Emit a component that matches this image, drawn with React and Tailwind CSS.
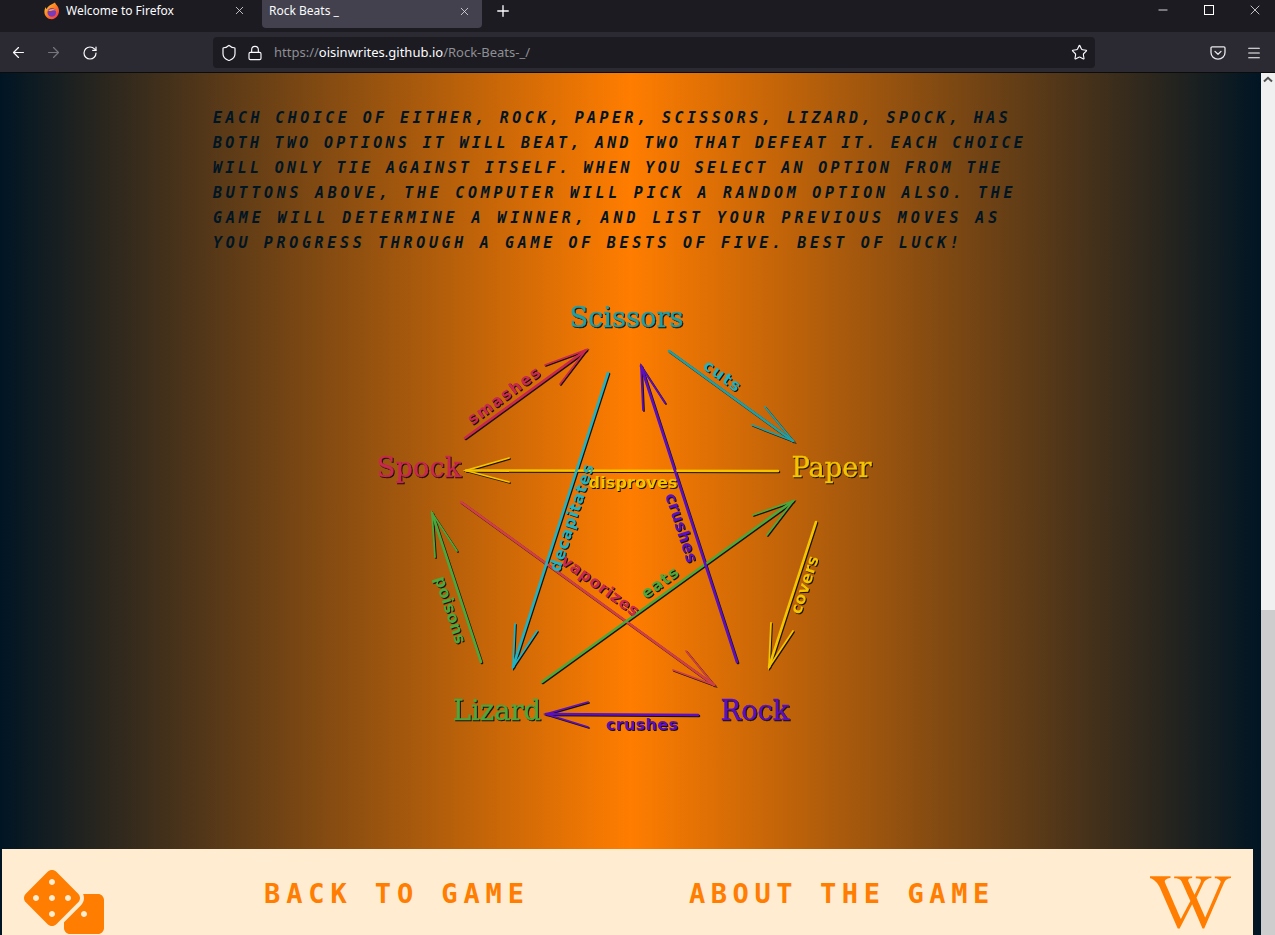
import { ArrowLeft, ArrowRight, RotateCw, Shield, Lock, Star, Menu, X, Plus, Minus } from 'lucide-react'
import { FaDice, FaWikipediaW } from 'react-icons/fa'

const RULE_LINES = [
  { text: 'each choice of either, rock, paper, scissors, lizard, spock, has', cls: 'tracking-[3.44px]' },
  { text: 'both two options it will beat, and two that defeat it. each choice', cls: 'tracking-[3.29px]' },
  { text: 'will only tie against itself. when you select an option from the', cls: 'tracking-[3.32px]' },
  { text: 'buttons above, the computer will pick a random option also. the', cls: 'tracking-[3.72px]' },
  { text: 'game will determine a winner, and list your previous moves as', cls: 'tracking-[3.89px]' },
  { text: 'you progress through a game of bests of five. best of luck!', cls: 'tracking-[3.67px]' },
]

const TEAL = '#1f9fa6'
const CYAN = '#1fb3c4'
const CRIMSON = '#c9284f'
const RED = '#cf3f4a'
const YELLOW = '#f5c400'
const PURPLE = '#5a0fc0'
const GREEN = '#4aa83e'

// page coordinates, the svg viewBox starts at 350,290
const ARROWS = [
  { color: RED, from: [461, 502], tip: [714, 685], a: [686, 651], b: [673, 670] },
  { color: TEAL, from: [669, 351], tip: [793, 441], a: [765, 407], b: [752, 425] },
  { color: CRIMSON, from: [465, 438], tip: [586, 350], a: [545, 365], b: [560, 384] },
  { color: YELLOW, from: [778, 471], tip: [466, 470.5], a: [509, 458], b: [509, 482] },
  { color: GREEN, from: [542, 682], tip: [793, 501], a: [753, 515], b: [767, 535] },
  { color: CYAN, from: [608, 373], tip: [513, 667], a: [515, 624], b: [537, 631] },
  { color: PURPLE, from: [737, 662], tip: [641, 366], a: [643, 410], b: [665, 403] },
  { color: GREEN, from: [481, 662], tip: [432, 513], a: [435, 557], b: [457, 551] },
  { color: YELLOW, from: [816, 522], tip: [769, 667], a: [771, 623], b: [793, 631] },
  { color: PURPLE, from: [698, 715], tip: [546, 714], a: [588, 702], b: [588, 727] },
]

const NAMES = [
  { text: 'Scissors', x: 626.5, y: 327, color: TEAL },
  { text: 'Spock', x: 419, y: 477, color: CRIMSON },
  { text: 'Paper', x: 831.5, y: 477, color: YELLOW },
  { text: 'Lizard', x: 497, y: 720, color: GREEN },
  { text: 'Rock', x: 755, y: 720, color: PURPLE },
]

const VERBS = [
  { text: 'smashes', x: 504, y: 396, angle: -36, len: 86, color: CRIMSON },
  { text: 'cuts', x: 722, y: 376, angle: 36, len: 42, color: CYAN },
  { text: 'vaporizes', x: 600, y: 586, angle: 36, len: 92, color: CRIMSON },
  { text: 'eats', x: 660, y: 583, angle: -36, len: 42, color: GREEN },
  { text: 'decapitates', x: 572, y: 518, angle: -72, len: 112, color: CYAN },
  { text: 'crushes', x: 681, y: 528, angle: 72, len: 72, color: PURPLE },
  { text: 'poisons', x: 450, y: 610, angle: 72, len: 70, color: GREEN },
  { text: 'covers', x: 805, y: 585, angle: -72, len: 60, color: YELLOW },
  { text: 'disproves', x: 633, y: 483, angle: 0, len: 89, color: YELLOW },
  { text: 'crushes', x: 642, y: 725, angle: 0, len: 72, color: PURPLE },
]

function FirefoxLogo() {
  return (
    <svg width="16" height="18" viewBox="0 0 16 18">
      <defs>
        <linearGradient id="fx" x1="0" y1="0" x2="1" y2="1">
          <stop offset="0" stopColor="#ffd43a" />
          <stop offset="0.5" stopColor="#ff7a1f" />
          <stop offset="1" stopColor="#f5245c" />
        </linearGradient>
      </defs>
      <path d="M11 0.5c0.6 2 2 2.6 3 4.5 1.4 2.6 1.4 5.6 0 8-1.4 2.6-3.8 4.2-6.4 4.2C3.6 17.2 0.4 14 0.4 10c0-2 0.6-3.6 1.4-5 0 1 0.4 1.6 1 2 0.4-2 2-3 3.6-4C8 2 9.6 1.4 11 0.5z" fill="url(#fx)" />
      <circle cx="7.8" cy="10.4" r="4.3" fill="#7b3bb8" />
      <path d="M4 9c1.5-2 5-3 8-0.5-2-0.6-4-0.4-5 0.4z" fill="#ff9d2e" />
    </svg>
  )
}

function PocketIcon() {
  return (
    <svg width="16" height="16" viewBox="0 0 16 16" fill="none" stroke="#e8e8ec" strokeWidth="1.3" strokeLinecap="round" strokeLinejoin="round">
      <path d="M2.2 1.9h11.6c0.7 0 1.2 0.5 1.2 1.2v4.4c0 3.8-3.1 6.7-7 6.7s-7-2.9-7-6.7V3.1c0-0.7 0.5-1.2 1.2-1.2z" />
      <path d="M5 6.4l3 2.9 3-2.9" />
    </svg>
  )
}

function BrowserChrome() {
  return (
    <div className="font-['Noto_Sans',sans-serif]">
      <div className="flex h-[32px] items-start bg-[#1c1b22]">
        <div className="ml-[44px] flex gap-[2px]">
          <div className="flex h-[21px] w-[216px] items-center pr-[14px]">
            <FirefoxLogo />
            <span className="ml-[6px] flex-1 text-[12px] text-[#fbfbfe]">Welcome to Firefox</span>
            <X size={13} strokeWidth={1.5} className="text-[#e0e0e6]" />
          </div>
          <div className="flex h-[28px] w-[220px] items-center rounded-b-[4px] bg-[#42414d] pb-[6px] pl-[7px] pr-[11px]">
            <span className="flex-1 text-[12px] text-[#fbfbfe]">Rock Beats _</span>
            <X size={13} strokeWidth={1.5} className="text-[#e0e0e6]" />
          </div>
        </div>
        <Plus size={18} strokeWidth={1.8} className="ml-[12px] mt-[2px] text-[#fbfbfe]" />
        <div className="ml-auto flex h-[20px] items-center">
          <Minus size={14} strokeWidth={1.4} className="text-white" />
          <div className="ml-[34px] size-[10px] border border-white" />
          <X size={16} strokeWidth={1.1} className="ml-[33px] mr-[12px] text-white" />
        </div>
      </div>
      <div className="flex h-[41px] items-center border-b border-[#0c0c0d] bg-[#2b2a33] pt-[1px]">
        <ArrowLeft size={17} strokeWidth={1.7} className="ml-[10px] text-[#fbfbfe]" />
        <ArrowRight size={17} strokeWidth={1.7} className="ml-[18px] text-[#76757c]" />
        <RotateCw size={16} strokeWidth={1.8} className="ml-[20px] text-[#fbfbfe]" />
        <div className="ml-[115px] flex h-[31px] w-[882px] items-center rounded-[4px] bg-[#1c1b22] pl-[7px] pr-[7px]">
          <Shield size={18} strokeWidth={1.6} className="text-[#fbfbfe]" />
          <Lock size={16} strokeWidth={1.7} className="ml-[9px] text-[#fbfbfe]" />
          <span className="ml-[11px] text-[13px] text-[#8f8f93]">
            https://<span className="text-[#fbfbfe]">oisinwrites.github.io</span>/Rock-Beats-_/
          </span>
          <Star size={17} strokeWidth={1.6} className="ml-auto text-[#fbfbfe]" />
        </div>
        <div className="ml-[115px]"><PocketIcon /></div>
        <Menu size={16} strokeWidth={1.6} className="ml-[20px] text-[#fbfbfe]" />
      </div>
    </div>
  )
}

function RulesDiagram() {
  return (
    <svg
      viewBox="350 290 560 470"
      width="560"
      height="470"
      className="ml-[350px] mt-[34px] shrink-0 drop-shadow-[1px_1px_0.7px_#1a1008]"
    >
      {ARROWS.map((arrow, i) => (
        <g key={i} fill="none" stroke={arrow.color} strokeLinecap="round">
          <line x1={arrow.from[0]} y1={arrow.from[1]} x2={arrow.tip[0]} y2={arrow.tip[1]} strokeWidth="2.6" />
          <path d={`M${arrow.a[0]} ${arrow.a[1]}L${arrow.tip[0]} ${arrow.tip[1]}L${arrow.b[0]} ${arrow.b[1]}`} strokeWidth="1.8" />
        </g>
      ))}
      {VERBS.map((verb, i) => (
        <text
          key={i}
          transform={`translate(${verb.x} ${verb.y}) rotate(${verb.angle})`}
          y="5"
          textAnchor="middle"
          textLength={verb.len}
          fill={verb.color}
          className="font-['DejaVu_Sans',sans-serif] text-[16px] font-bold"
        >
          {verb.text}
        </text>
      ))}
      {NAMES.map((name) => (
        <text
          key={name.text}
          x={name.x}
          y={name.y}
          textAnchor="middle"
          fill={name.color}
          stroke={name.color}
          strokeWidth="0.4"
          className="font-['DejaVu_Serif',serif] text-[27.3px]"
        >
          {name.text}
        </text>
      ))}
    </svg>
  )
}

function Footer() {
  const link = "font-['DejaVu_Sans_Mono',monospace] text-[27px] font-bold uppercase leading-none text-[#ff7d00]"
  return (
    <footer className="ml-[2px] mr-[8px] mt-auto flex h-[86px] shrink-0 items-start bg-[#ffecd1] pl-[22px] pr-[22px] pt-[21px]">
      <FaDice className="h-[64px] w-[80px] text-[#ff7d00]" />
      <a className={`${link} ml-[160px] mt-[10px] tracking-[5.9px]`}>Back to game</a>
      <a className={`${link} ml-[159px] mt-[10px] tracking-[5.6px]`}>About the game</a>
      <FaWikipediaW className="ml-auto h-[65px] w-[81px] text-[#ff7d00]" />
    </footer>
  )
}

export default function App() {
  return (
    <div className="flex h-[935px] flex-col overflow-hidden">
      <BrowserChrome />
      <div className="flex min-h-0 flex-1">
        <main className="flex min-w-0 flex-1 flex-col bg-[linear-gradient(90deg,#001524,#ff7d00,#001524)]">
          <div className="ml-[213px] pt-[33px] font-['DejaVu_Sans_Mono',monospace] text-[15px] font-bold uppercase italic leading-[25px] text-[#001524]">
            {RULE_LINES.map((line) => (
              <p key={line.text} className={`whitespace-nowrap ${line.cls}`}>{line.text}</p>
            ))}
          </div>
          <RulesDiagram />
          <Footer />
        </main>
        <aside className="flex w-[14px] shrink-0 flex-col bg-[#f0f0f0]">
          <svg viewBox="0 0 14 14" width="14" height="14" className="shrink-0">
            <path d="M3 8.5L7 4.8l4 3.7" fill="none" stroke="#505050" strokeWidth="2" />
          </svg>
          <div className="mt-[523px] flex-1 bg-[#cdcdcd]" />
        </aside>
      </div>
    </div>
  )
}
